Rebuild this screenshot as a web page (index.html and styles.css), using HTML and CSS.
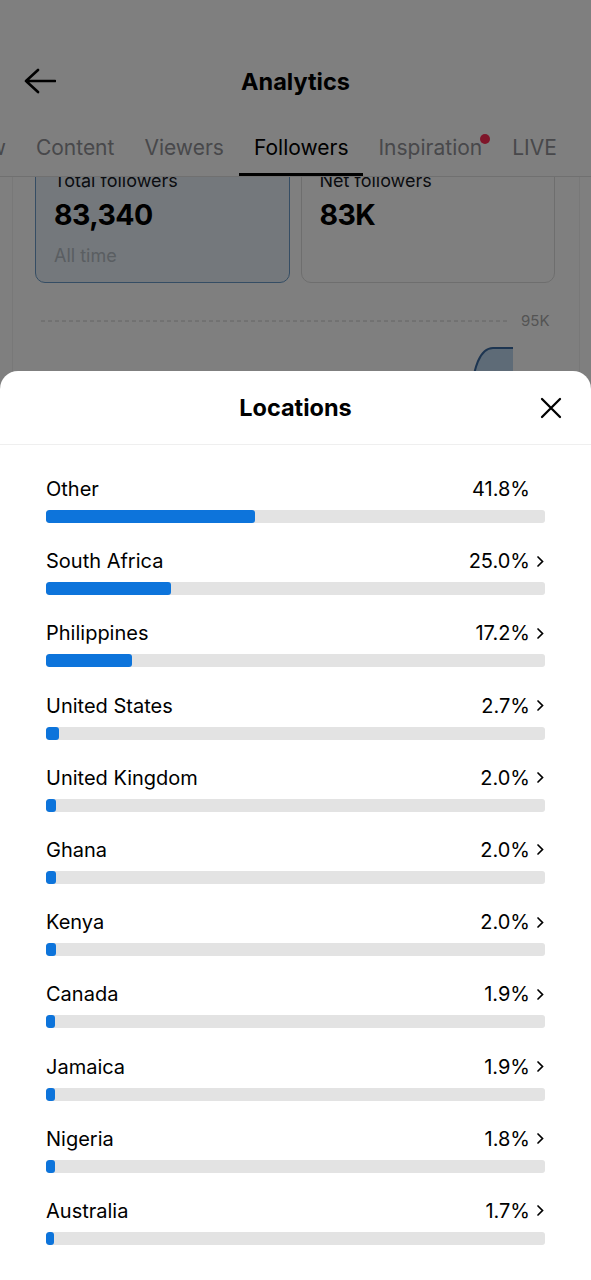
FILE: index.html
```html
<!DOCTYPE html>
<html lang="en">
<head>
    <meta charset="UTF-8">
    <meta name="viewport" content="width=device-width, initial-scale=1.0">
    <title>Analytics - Locations</title>
    <link rel="stylesheet" href="styles.css">
</head>
<body>

<div class="page">
    <header class="topbar">
        <svg class="back" width="32" height="26" viewBox="0 0 32 26">
            <path d="M14 2 L2 13 L14 24 M2 13 H31" fill="none" stroke="#000" stroke-width="2.6" stroke-linecap="round" stroke-linejoin="round"/>
        </svg>
        <h1>Analytics</h1>
        <span></span>
    </header>

    <nav class="tabs">
        <a class="tab">Overview</a>
        <a class="tab">Content</a>
        <a class="tab">Viewers</a>
        <a class="tab active">Followers</a>
        <a class="tab">Inspiration<i class="dot"></i></a>
        <a class="tab">LIVE</a>
    </nav>

    <div class="scroll">
        <div class="panel">
            <div class="cards">
                <div class="card selected">
                    <div class="card-label">Total followers</div>
                    <div class="card-num">83,340</div>
                    <div class="card-sub">All time</div>
                </div>
                <div class="card">
                    <div class="card-label">Net followers</div>
                    <div class="card-num">83K</div>
                </div>
            </div>
            <div class="chart">
                <svg width="472" height="90" viewBox="0 0 472 90">
                    <line x1="0" y1="21" x2="468" y2="21" stroke="#c8c8c8" stroke-width="1" stroke-dasharray="4 3"/>
                    <path d="M430 90 C433 70 438 48 452 48 L472 48 L472 90 Z" fill="#bcd6ee"/>
                    <path d="M430 90 C433 70 438 48 452 48 L472 48" fill="none" stroke="#3b6ba3" stroke-width="2"/>
                </svg>
                <span class="axis">95K</span>
            </div>
        </div>
    </div>
</div>

<div class="overlay"></div>

<section class="sheet">
    <div class="sheet-head">
        <span></span>
        <h2>Locations</h2>
        <svg class="close" width="22" height="22" viewBox="0 0 22 22">
            <path d="M2 2 L20 20 M20 2 L2 20" stroke="#000" stroke-width="2.3" stroke-linecap="round"/>
        </svg>
    </div>

    <div class="list">
        <div class="loc">
            <div class="loc-top"><span>Other</span><b>41.8%</b><svg class="chev hidden" width="9" height="13" viewBox="0 0 9 13"><path d="M2 2 L6.5 6.5 L2 11" fill="none" stroke="#000" stroke-width="1.7" stroke-linecap="round"/></svg></div>
            <div class="track"><div class="fill" style="width:41.8%"></div></div>
        </div>
        <div class="loc">
            <div class="loc-top"><span>South Africa</span><b>25.0%</b><svg class="chev" width="9" height="13" viewBox="0 0 9 13"><path d="M2 2 L6.5 6.5 L2 11" fill="none" stroke="#000" stroke-width="1.7" stroke-linecap="round"/></svg></div>
            <div class="track"><div class="fill" style="width:25%"></div></div>
        </div>
        <div class="loc">
            <div class="loc-top"><span>Philippines</span><b>17.2%</b><svg class="chev" width="9" height="13" viewBox="0 0 9 13"><path d="M2 2 L6.5 6.5 L2 11" fill="none" stroke="#000" stroke-width="1.7" stroke-linecap="round"/></svg></div>
            <div class="track"><div class="fill" style="width:17.2%"></div></div>
        </div>
        <div class="loc">
            <div class="loc-top"><span>United States</span><b>2.7%</b><svg class="chev" width="9" height="13" viewBox="0 0 9 13"><path d="M2 2 L6.5 6.5 L2 11" fill="none" stroke="#000" stroke-width="1.7" stroke-linecap="round"/></svg></div>
            <div class="track"><div class="fill" style="width:2.7%"></div></div>
        </div>
        <div class="loc">
            <div class="loc-top"><span>United Kingdom</span><b>2.0%</b><svg class="chev" width="9" height="13" viewBox="0 0 9 13"><path d="M2 2 L6.5 6.5 L2 11" fill="none" stroke="#000" stroke-width="1.7" stroke-linecap="round"/></svg></div>
            <div class="track"><div class="fill" style="width:2%"></div></div>
        </div>
        <div class="loc">
            <div class="loc-top"><span>Ghana</span><b>2.0%</b><svg class="chev" width="9" height="13" viewBox="0 0 9 13"><path d="M2 2 L6.5 6.5 L2 11" fill="none" stroke="#000" stroke-width="1.7" stroke-linecap="round"/></svg></div>
            <div class="track"><div class="fill" style="width:2%"></div></div>
        </div>
        <div class="loc">
            <div class="loc-top"><span>Kenya</span><b>2.0%</b><svg class="chev" width="9" height="13" viewBox="0 0 9 13"><path d="M2 2 L6.5 6.5 L2 11" fill="none" stroke="#000" stroke-width="1.7" stroke-linecap="round"/></svg></div>
            <div class="track"><div class="fill" style="width:2%"></div></div>
        </div>
        <div class="loc">
            <div class="loc-top"><span>Canada</span><b>1.9%</b><svg class="chev" width="9" height="13" viewBox="0 0 9 13"><path d="M2 2 L6.5 6.5 L2 11" fill="none" stroke="#000" stroke-width="1.7" stroke-linecap="round"/></svg></div>
            <div class="track"><div class="fill" style="width:1.9%"></div></div>
        </div>
        <div class="loc">
            <div class="loc-top"><span>Jamaica</span><b>1.9%</b><svg class="chev" width="9" height="13" viewBox="0 0 9 13"><path d="M2 2 L6.5 6.5 L2 11" fill="none" stroke="#000" stroke-width="1.7" stroke-linecap="round"/></svg></div>
            <div class="track"><div class="fill" style="width:1.9%"></div></div>
        </div>
        <div class="loc">
            <div class="loc-top"><span>Nigeria</span><b>1.8%</b><svg class="chev" width="9" height="13" viewBox="0 0 9 13"><path d="M2 2 L6.5 6.5 L2 11" fill="none" stroke="#000" stroke-width="1.7" stroke-linecap="round"/></svg></div>
            <div class="track"><div class="fill" style="width:1.8%"></div></div>
        </div>
        <div class="loc">
            <div class="loc-top"><span>Australia</span><b>1.7%</b><svg class="chev" width="9" height="13" viewBox="0 0 9 13"><path d="M2 2 L6.5 6.5 L2 11" fill="none" stroke="#000" stroke-width="1.7" stroke-linecap="round"/></svg></div>
            <div class="track"><div class="fill" style="width:1.7%"></div></div>
        </div>
    </div>
</section>

</body>
</html>
```

FILE: styles.css
```css
:root { --blue: #0d74db; --track: #e3e3e3; --ink: #000; --muted: #8e8f94; }
body { margin: 0; font-family: Inter, 'Noto Sans', sans-serif; color: var(--ink); background: #fff; overflow: hidden; height: 1280px; }

/* page behind the sheet */
.page { background: #fff; }
.topbar { display: grid; grid-template-columns: 1fr auto 1fr; align-items: center; height: 50px; padding: 56px 0 16px; }
.back { margin-left: 24px; }
.topbar h1 { margin: 0; font-size: 23.5px; font-weight: 700; }

.tabs { display: flex; height: 54px; border-bottom: 1px solid #e0e0e0; margin-left: -103px; white-space: nowrap; }
.tab { position: relative; display: flex; align-items: center; padding: 0 15px; font-size: 21px; color: #909196; border-bottom: 3px solid transparent; box-sizing: border-box; }
.tab.active { color: #000; border-bottom-color: #000; }
.dot { position: absolute; top: 12px; right: 7px; width: 10px; height: 10px; border-radius: 50%; background: #fe2c55; }

.scroll { height: 220px; overflow: hidden; }
.panel { margin: -34px 11px 0 12px; padding: 12px 24px 0 22px; border-left: 1px solid #f0f0f0; border-right: 1px solid #f0f0f0; }
.cards { display: grid; grid-template-columns: 1fr 1fr; gap: 11px; }
.card { height: 128px; box-sizing: border-box; padding: 14px 18px 0; border: 1px solid #dcdcdc; border-radius: 10px; }
.card.selected { background: #e9f1f8; border-color: #6a9bc9; }
.card-label { font-size: 18px; line-height: 22px; color: #161823; }
.card-num { margin-top: 6px; font-size: 28.5px; line-height: 34px; font-weight: 700; letter-spacing: -0.6px; }
.card-sub { margin-top: 13px; font-size: 18px; line-height: 22px; color: #b4bcc4; }

.chart { display: flex; margin: 17px 0 0 6px; gap: 8px; }
.axis { margin-top: 10px; font-size: 15px; line-height: 22px; color: #a8a8a8; }

.overlay { position: fixed; inset: 0; background: rgba(0, 0, 0, 0.5); }

/* bottom sheet */
.sheet { position: fixed; top: 371px; left: 0; right: 0; bottom: 0; background: #fff; border-radius: 18px 18px 0 0; }
.sheet-head { display: grid; grid-template-columns: 1fr auto 1fr; align-items: center; height: 73px; border-bottom: 1px solid #efefef; }
.sheet-head h2 { margin: 0; font-size: 23.5px; font-weight: 700; }
.close { justify-self: end; margin-right: 29px; }

.list { padding: 31px 46px 0; }
.loc { padding-bottom: 25.2px; }
.loc-top { display: flex; align-items: center; height: 26px; font-size: 20px; }
.loc-top span { flex: 1; }
.loc-top b { font-weight: 400; }
.chev { margin-left: 6px; }
.chev.hidden { visibility: hidden; }
.track { margin-top: 8px; height: 13px; border-radius: 3px; background: var(--track); overflow: hidden; }
.fill { height: 100%; border-radius: 3px; background: var(--blue); }
```
